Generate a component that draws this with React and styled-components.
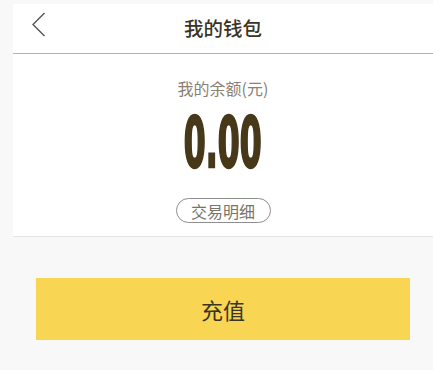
import React from "react";
import styled, { createGlobalStyle } from "styled-components";

const GlobalStyle = createGlobalStyle`
  body {
    margin: 0;
    background: #f8f8f8;
    font-family: "Noto Sans CJK SC", "Noto Sans", sans-serif;
  }
`;

const Page = styled.div`
  padding: 4px 0 0 13px;
  width: 433px;
  height: 370px;
  box-sizing: border-box;
`;

const Header = styled.header`
  position: relative;
  height: 49px;
  background: #fff;
  display: flex;
  align-items: center;
  justify-content: center;
  border-bottom: 1px solid #b4b4b4;
`;

const BackIcon = styled.svg`
  position: absolute;
  left: 19px;
  top: 8px;
  width: 14px;
  height: 26px;
`;

const Title = styled.h1`
  margin: 0 0 2px 0;
  font-size: 19.5px;
  font-weight: 500;
  color: #3b3426;
`;

const Balance = styled.section`
  background: #fff;
  height: 183px;
  border-bottom: 1px solid #e4e4e4;
  display: flex;
  flex-direction: column;
  align-items: center;
  padding-top: 24px;
  box-sizing: border-box;
`;

const Label = styled.div`
  font-size: 16px;
  line-height: 20px;
  color: #8a8172;
`;

const Amount = styled.div`
  font-family: "DejaVu Sans Condensed", "DejaVu Sans", sans-serif;
  font-weight: 700;
  font-size: 70px;
  line-height: 62px;
  height: 62px;
  margin-top: 14px;
  color: #463819;
  -webkit-text-stroke: 2.5px #463819;
  transform: scaleX(0.5);
`;

const DetailButton = styled.button`
  margin-top: 24px;
  width: 95px;
  height: 25px;
  border: 1.5px solid #8e8e8e;
  border-radius: 13px;
  background: #fff;
  color: #7a7468;
  font-family: inherit;
  font-size: 16px;
  line-height: 20px;
  padding: 0;
`;

const Footer = styled.div`
  padding: 41px 0 0 23px;
`;

const ChargeButton = styled.button`
  width: 374px;
  height: 62px;
  border: none;
  background: #f8d654;
  color: #3b3426;
  font-family: inherit;
  font-size: 22px;
  padding: 0;
`;

const App = () => (
  <>
    <GlobalStyle />
    <Page>
      <Header>
        <BackIcon viewBox="0 0 14 26">
          <path d="M12.5 1 L1 12.5 L12.5 24" fill="none" stroke="#555" strokeWidth="1.4" />
        </BackIcon>
        <Title>我的钱包</Title>
      </Header>
      <Balance>
        <Label>我的余额(元)</Label>
        <Amount>0.00</Amount>
        <DetailButton>交易明细</DetailButton>
      </Balance>
      <Footer>
        <ChargeButton>充值</ChargeButton>
      </Footer>
    </Page>
  </>
);

export default App;
